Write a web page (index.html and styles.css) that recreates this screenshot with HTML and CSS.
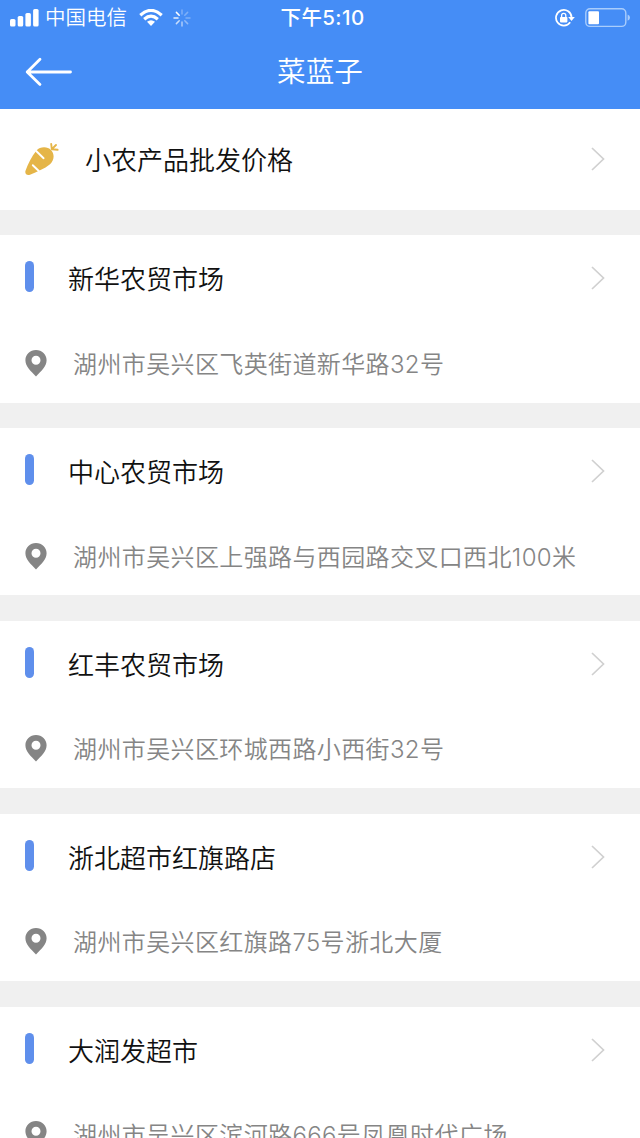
FILE: index.html
```
<!DOCTYPE html>
<html lang="zh-CN">
<head>
  <meta charset="UTF-8">
  <meta name="viewport" content="width=device-width, initial-scale=1.0">
  <title>菜蓝子</title>
  <link rel="stylesheet" href="styles.css">
</head>
<body>

  <svg class="sprite" aria-hidden="true">
    <symbol id="arrow" viewBox="0 0 14 24">
      <path d="M1 1L12.5 12L1 23" fill="none" stroke="#d0d0d0" stroke-width="1.7"/>
    </symbol>
    <symbol id="pin" viewBox="0 0 22 27">
      <path fill="#858585" fill-rule="evenodd" d="M11 0C5 0 0.4 4.4 0.4 10.2C0.4 16.5 6 21 11 26.6C16 21 21.6 16.5 21.6 10.2C21.6 4.4 17 0 11 0ZM11 5.8A4.5 4.5 0 1 1 11 14.8A4.5 4.5 0 1 1 11 5.8Z"/>
    </symbol>
  </svg>

  <header class="header">
    <div class="status">
      <div class="status-left">
        <svg class="signal" width="29" height="18" viewBox="0 0 29 18" fill="#fff">
          <rect x="0" y="10" width="5.5" height="7.5" rx="1.6"/>
          <rect x="7.7" y="7" width="5.5" height="10.5" rx="1.6"/>
          <rect x="15.4" y="4" width="5.5" height="13.5" rx="1.6"/>
          <rect x="23.1" y="0" width="5.5" height="17.5" rx="1.6"/>
        </svg>
        <span class="carrier">中国电信</span>
        <svg class="wifi" width="24" height="18" viewBox="0 0 24 18">
          <path d="M1.3 6.2Q12 -3.4 22.7 6.2M5.2 10.2Q12 4.2 18.8 10.2" fill="none" stroke="#fff" stroke-width="3.2"/>
          <path d="M8 12.8Q12 9.6 16 12.8L12 17Z" fill="#fff"/>
        </svg>
        <svg class="loading" width="18" height="18" viewBox="-9 -9 18 18" stroke="#fff" stroke-width="1.5" stroke-linecap="round">
          <path d="M0 -4V-8" opacity=".3"/>
          <path d="M2.8 -2.8L5.6 -5.6" opacity=".3"/>
          <path d="M4 0H8" opacity=".3"/>
          <path d="M2.8 2.8L5.6 5.6" opacity=".4"/>
          <path d="M0 4V8" opacity=".55"/>
          <path d="M-2.8 2.8L-5.6 5.6" opacity=".7"/>
          <path d="M-4 0H-8" opacity=".85"/>
          <path d="M-2.8 -2.8L-5.6 -5.6"/>
        </svg>
      </div>
      <span class="time">下午5:10</span>
      <div class="status-right">
        <svg class="lock" width="20" height="18" viewBox="0 0 20 18">
          <path d="M15.2 13.2A7.8 7.8 0 1 1 16.6 8.5" fill="none" stroke="#fff" stroke-width="1.7"/>
          <path d="M13.2 8H19.8L16.5 12Z" fill="#fff"/>
          <rect x="5" y="8" width="7.4" height="5.4" rx=".8" fill="#fff"/>
          <path d="M6.6 8.4V6.4A2.1 2.1 0 0 1 10.8 6.4V8.4" fill="none" stroke="#fff" stroke-width="1.3"/>
        </svg>
        <svg class="battery" width="46" height="20" viewBox="0 0 46 20">
          <rect x=".8" y=".8" width="40" height="17.6" rx="4.2" fill="none" stroke="#a9cdfc" stroke-width="1.4"/>
          <rect x="3.4" y="3.2" width="10.6" height="13" rx="1" fill="#fff"/>
          <path d="M42.6 6.4Q45 7.4 45 9.6Q45 11.8 42.6 12.8Z" fill="#a9cdfc"/>
        </svg>
      </div>
    </div>
    <div class="navbar">
      <svg class="back" width="48" height="30" viewBox="0 0 48 30">
        <path d="M15 2.2L2.2 15L15 27.4M2.2 15H45.5" fill="none" stroke="#fff" stroke-width="2.8" stroke-linecap="round" stroke-linejoin="round"/>
      </svg>
      <h1 class="title">菜蓝子</h1>
    </div>
  </header>

  <main class="list">
    <section class="price">
      <svg class="carrot" width="34" height="34" viewBox="0 0 34 34">
        <path fill="#e5b548" d="M11.5 8.6C15 4.4 22.6 4.4 26 8C29.8 12 29.4 18.4 25 22.2C19.5 26.8 12 29.6 5 32.7C2 34 -0.6 31.6 0.6 28.6C3.3 21.7 6.4 14.6 11.5 8.6Z"/>
        <path d="M11.2 9L18.6 16.2M7.8 23.2L13.8 29" stroke="#fff" stroke-width="1.9" stroke-linecap="round"/>
        <path d="M26.8 7.2L26.2 2M26.8 7.2L31 3M26.8 7.2L32.6 7.8" stroke="#e5b548" stroke-width="1.9" stroke-linecap="round"/>
      </svg>
      <span class="name">小农产品批发价格</span>
      <svg class="arrow"><use href="#arrow"/></svg>
    </section>

    <section class="market">
      <div class="market-head">
        <i class="bar"></i>
        <span class="name">新华农贸市场</span>
        <svg class="arrow"><use href="#arrow"/></svg>
      </div>
      <div class="address">
        <svg class="pin"><use href="#pin"/></svg>
        <span>湖州市吴兴区飞英街道新华路32号</span>
      </div>
    </section>

    <section class="market">
      <div class="market-head">
        <i class="bar"></i>
        <span class="name">中心农贸市场</span>
        <svg class="arrow"><use href="#arrow"/></svg>
      </div>
      <div class="address">
        <svg class="pin"><use href="#pin"/></svg>
        <span>湖州市吴兴区上强路与西园路交叉口西北100米</span>
      </div>
    </section>

    <section class="market">
      <div class="market-head">
        <i class="bar"></i>
        <span class="name">红丰农贸市场</span>
        <svg class="arrow"><use href="#arrow"/></svg>
      </div>
      <div class="address">
        <svg class="pin"><use href="#pin"/></svg>
        <span>湖州市吴兴区环城西路小西街32号</span>
      </div>
    </section>

    <section class="market">
      <div class="market-head">
        <i class="bar"></i>
        <span class="name">浙北超市红旗路店</span>
        <svg class="arrow"><use href="#arrow"/></svg>
      </div>
      <div class="address">
        <svg class="pin"><use href="#pin"/></svg>
        <span>湖州市吴兴区红旗路75号浙北大厦</span>
      </div>
    </section>

    <section class="market">
      <div class="market-head">
        <i class="bar"></i>
        <span class="name">大润发超市</span>
        <svg class="arrow"><use href="#arrow"/></svg>
      </div>
      <div class="address">
        <svg class="pin"><use href="#pin"/></svg>
        <span>湖州市吴兴区滨河路666号凤凰时代广场</span>
      </div>
    </section>
  </main>

</body>
</html>
```
FILE: styles.css
```
* {
  box-sizing: border-box;
}

body {
  margin: 0;
  height: 1138px;
  overflow: hidden;
  background: #f0f0f0;
  font-family: Inter, "Noto Sans CJK SC", sans-serif;
  font-weight: 350;
}

svg {
  display: block;
  flex: none;
}

.sprite {
  display: none;
}

.header {
  height: 109px;
  background: #458df6;
  color: #fff;
}

/* 状态栏 */
.status {
  display: grid;
  grid-template-columns: 1fr auto 1fr;
  align-items: center;
  height: 35px;
  padding: 0 9px 0 10px;
}

.status-left,
.status-right {
  display: flex;
  align-items: center;
}

.status-right {
  justify-content: flex-end;
  gap: 10px;
}

.carrier {
  margin-left: 6px;
  font-size: 20.5px;
  line-height: 34px;
  padding-top: 1px;
}

.wifi {
  margin-left: 12px;
}

.loading {
  margin-left: 10px;
}

.time {
  padding-left: 4px;
  font-size: 20.5px;
  font-weight: 500;
  letter-spacing: 0.4px;
  line-height: 35px;
}

/* 导航栏 */
.navbar {
  display: grid;
  grid-template-columns: 60px 1fr 60px;
  align-items: center;
  height: 74px;
  padding: 0 25px;
}

.title {
  margin: 0;
  text-align: center;
  font-size: 28.6px;
  font-weight: 350;
  line-height: 74px;
}

/* 列表 */
.list {
  display: flex;
  flex-direction: column;
  gap: 25.6px;
}

.price,
.market {
  flex: none;
  padding: 0 35px 0 25px;
  background: #fff;
}

.price {
  display: flex;
  align-items: center;
  height: 100.8px;
}

.name {
  flex: 1;
  padding-top: 4px;
  color: #111;
  font-size: 26px;
  line-height: 40px;
}

.carrot {
  margin-right: 26px;
}

.arrow {
  width: 14px;
  height: 24px;
}

.market {
  height: 167.2px;
}

.market-head {
  display: flex;
  align-items: center;
  height: 86px;
}

.bar {
  width: 9px;
  height: 31px;
  margin-right: 34px;
  margin-bottom: 3px;
  border-radius: 5px;
  background: #5f8fec;
}

.address {
  display: flex;
  align-items: center;
  height: 84px;
  color: #858585;
  font-size: 24px;
  letter-spacing: 0.38px;
  white-space: nowrap;
}

.address span {
  padding-bottom: 2px;
}

.pin {
  width: 22px;
  height: 27px;
  margin-right: 26px;
}
```
